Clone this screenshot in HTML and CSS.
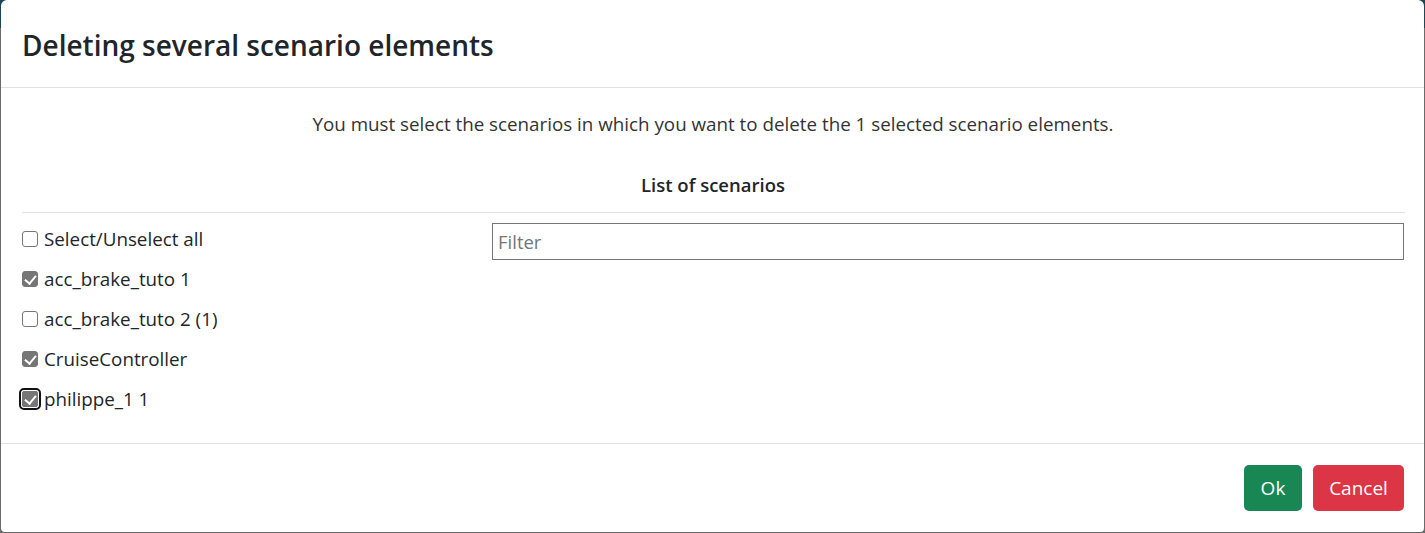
FILE: index.html
```html
<!DOCTYPE html>
<html lang="en">
<head>
<meta charset="utf-8">
<title>Deleting several scenario elements</title>
<link rel="stylesheet" href="styles.css">
</head>
<body>
<div class="modal">
  <div class="modal-header">
    <h4 class="modal-title">Deleting several scenario elements</h4>
  </div>
  <div class="modal-body">
    <p class="intro">You must select the scenarios in which you want to delete the 1 selected scenario elements.</p>
    <h6 class="list-title">List of scenarios</h6>
    <hr class="sep">
    <div class="columns">
      <div class="checks">
        <label class="check"><input type="checkbox"><span>Select/Unselect all</span></label>
        <label class="check"><input type="checkbox" checked><span>acc_brake_tuto 1</span></label>
        <label class="check"><input type="checkbox"><span>acc_brake_tuto 2 (1)</span></label>
        <label class="check"><input type="checkbox" checked><span>CruiseController</span></label>
        <label class="check"><input type="checkbox" class="focused" checked><span>philippe_1 1</span></label>
      </div>
      <div class="filter-col">
        <input type="text" class="filter" placeholder="Filter">
      </div>
    </div>
  </div>
  <div class="modal-footer">
    <button class="btn btn-ok">Ok</button>
    <button class="btn btn-cancel">Cancel</button>
  </div>
</div>
</body>
</html>
```

FILE: styles.css
```css
* { box-sizing: border-box; }
html, body { margin: 0; height: 100%; }
body {
  background: linear-gradient(#1a4656 0 28px, #6a6a6a 28px);
  font-family: "Open Sans", "Noto Sans", sans-serif;
  color: #212529;
  padding: 0 1px 1px 1px;
}
.modal {
  background: #fff;
  border-radius: 6px 6px 4px 4px;
  height: 532px;
  display: flex;
  flex-direction: column;
}
.modal-header {
  height: 88px;
  padding: 0 21px;
  display: flex;
  align-items: center;
  border-bottom: 1px solid #dee2e6;
}
.modal-title {
  margin: 0;
  font-size: 28px;
  font-weight: 600;
  letter-spacing: 0;
  padding-top: 2px;
}
.modal-body {
  padding: 0 20px 0 21px;
  height: 356px;
  border-bottom: 1px solid #dee2e6;
}
.intro {
  margin: 23px 0 0 0;
  text-align: center;
  font-size: 18.8px;
  line-height: 27px;
  color: #333;
}
.list-title {
  margin: 33px 0 0 0;
  text-align: center;
  font-size: 18.5px;
  line-height: 27px;
  font-weight: 600;
}
.sep {
  margin: 14px -1px 0 0;
  border: 0;
  border-top: 1px solid #dee2e6;
}
.columns {
  display: grid;
  grid-template-columns: 470px 1fr;
}
.checks {
  display: flex;
  flex-direction: column;
  padding-top: 13px;
  gap: 13px;
}
.check {
  display: flex;
  align-items: center;
  gap: 6px;
  font-size: 18.8px;
  line-height: 27px;
  color: #212529;
}
.check input {
  appearance: none;
  -webkit-appearance: none;
  margin: 0;
  width: 16px;
  height: 16px;
  border: 1px solid #767676;
  border-radius: 3px;
  background: #fff;
  position: relative;
  flex: none;
  top: -1px;
}
.check input:checked {
  background: #767676;
  border-color: #767676;
}
.check input:checked::after {
  content: "";
  position: absolute;
  left: 4px;
  top: 1px;
  width: 5px;
  height: 9px;
  border: solid #fff;
  border-width: 0 2px 2px 0;
  transform: rotate(40deg);
}
.check input.focused {
  outline: 2px solid #111;
  outline-offset: 1px;
  border-radius: 2px;
}
.filter-col {
  padding-top: 10px;
}
.filter {
  width: 100%;
  height: 37px;
  border: 1px solid #767676;
  padding: 0 5px;
  font-family: inherit;
  font-size: 18.5px;
  color: #212529;
  border-radius: 0;
}
.filter::placeholder { color: #757575; }
.modal-footer {
  flex: 1;
  display: flex;
  justify-content: flex-end;
  align-items: center;
  gap: 11px;
  padding: 0 20px 0 0;
}
.btn {
  height: 46px;
  border: 0;
  border-radius: 5px;
  color: #fff;
  font-family: inherit;
  font-size: 19px;
  padding: 0 10px;
}
.btn-ok { background: #198754; width: 58px; }
.btn-cancel { background: #dc3545; width: 91px; }
```
